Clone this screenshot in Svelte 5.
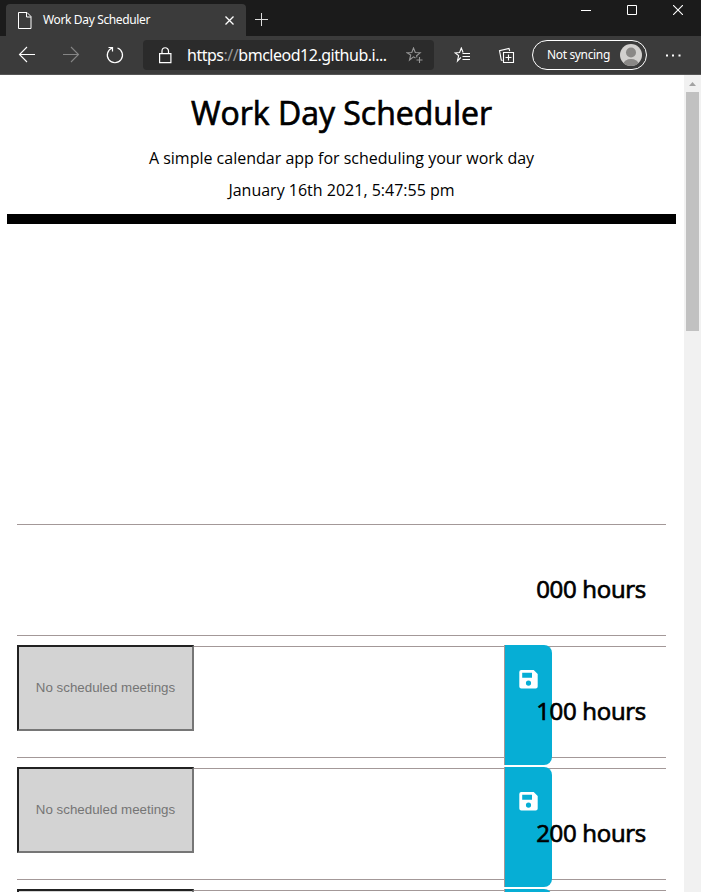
<script>
  const hours = ['000 hours', '100 hours', '200 hours', ''];
</script>

<div class="window">
  <div class="titlebar">
    <div class="tab">
      <svg class="page-icon" width="14" height="17" viewBox="0 0 14 17" fill="none" stroke="#fff"><path d="M.5.5h8.500l4 4v12H.5zM8.500.5v4.500H13" /></svg>
      <span class="tab-title">Work Day Scheduler</span>
      <svg width="9" height="9" viewBox="0 0 9 9" stroke="#fff" stroke-width="1.3"><path d="M.5.5l8 8M8.5.5l-8 8" /></svg>
    </div>
    <svg class="new-tab" width="13" height="13" viewBox="0 0 13 13" stroke="#ddd"><path d="M6.5 0v13M0 6.5h13" /></svg>
    <div class="controls">
      <svg width="10" height="10" viewBox="0 0 10 10" stroke="#fff"><path d="M0 5.5h10" /></svg>
      <svg width="10" height="10" viewBox="0 0 10 10" fill="none" stroke="#fff"><path d="M.5.5h9v9h-9z" /></svg>
      <svg width="10" height="10" viewBox="0 0 10 10" stroke="#fff" stroke-width="1.1"><path d="M0 0l10 10M10 0L0 10" /></svg>
    </div>
  </div>

  <div class="toolbar">
    <svg width="143" height="38" viewBox="0 36 143 38" fill="none" stroke="#fff" stroke-width="1.1">
      <path d="M35 54.5H19.5M27 47l-7.5 7.500L27 62" />
      <path stroke="#858585" d="M63 54.5h15.500M71 47l7.500 7.500L71 62" />
      <path d="M112.300 48a7.600 7.600 0 1 0 5.200 0M108.500 47.500h4v4" stroke-width="1.200" />
    </svg>
    <div class="address">
      <svg width="13" height="17" viewBox="0 0 13 17" fill="none" stroke="#fff" stroke-width="1.2"><path d="M.6 6.600h11.300v9H.6zM3 6.600V4a3.250 3.250 0 0 1 6.500 0v2.600" /></svg>
      <span class="url">https<i>://</i>bmcleod12.github.i...</span>
      <svg class="star" width="17" height="17" viewBox="0 0 17 17" fill="none" stroke="#969696" stroke-width="1.1"><path d="M9.500 11l-2-1.200-4 3.200 1.200-5.100L1 5.800l4.800-.3L7.500 1l1.800 4.500 4.900.3-3.600 3 .4 1.700M13.500 10v6M10.500 13h6" /></svg>
    </div>
    <svg class="fav" width="17" height="17" viewBox="0 0 17 17" fill="none" stroke="#fff" stroke-width="1.1"><path d="M6.800 10.500L3.500 14l1.100-5.500L1 5.900l4.600-.4L7.300 1l1.800 4.500M8.500 6.500H16M8.500 9.500H16M8.500 12.500H16" /></svg>
    <svg class="collections" width="17" height="17" viewBox="0 0 17 17" fill="none" stroke="#fff" stroke-width="1.1"><path d="M5.500 5.500h10v10h-10zM10.500 7.500v6M7.500 10.500h6M4.500 13.500l-1.200-.5L1.500 3.700 11 1.500l.7 2.500" /></svg>
    <div class="profile">
      <span>Not syncing</span>
      <svg width="22" height="22" viewBox="0 0 22 22"><defs><clipPath id="face"><circle cx="11" cy="11" r="11" /></clipPath></defs><g clip-path="url(#face)"><path fill="#d2d0ce" d="M0 0h22v22H0z" /><circle cx="11" cy="8.500" r="5" fill="#8a8886" /><ellipse cx="11" cy="20" rx="7.500" ry="5" fill="#8a8886" /></g></svg>
    </div>
    <svg class="more" width="15" height="3" viewBox="0 0 15 3" fill="#fff"><path d="M0 .5h2v2H0zM6 .5h2v2H6zM12.500 .5h2v2h-2z" /></svg>
  </div>

  <div class="viewport">
    <main>
      <header>
        <h1>Work Day Scheduler</h1>
        <p>A simple calendar app for scheduling your work day</p>
        <p>January 16th 2021, 5:47:55 pm</p>
      </header>
      <div class="planner">
        {#each hours as hour, i}
          <div class="row">
            {#if i > 0}
              <input placeholder={hour ? 'No scheduled meetings' : ''} aria-label="Meeting" />
              <button aria-label="Save">
                <svg width="19" height="19" viewBox="0 0 19 19"><path fill="#fff" fill-rule="evenodd" d="M2.300 0H14.700l4 4v12.500a2 2 0 0 1-2 2H2.300a2 2 0 0 1-2-2V2a2 2 0 0 1 2-2zM3.200 2.800v4.900h9.800v-4.900zM9.500 10.500a2.600 2.600 0 1 0 0 5.200 2.600 2.600 0 0 0 0-5.200z" /></svg>
              </button>
            {/if}
            {#if hour}
              <h2>{hour}</h2>
            {/if}
          </div>
        {/each}
      </div>
    </main>
    <div class="scrollbar">
      <svg width="7" height="4" viewBox="0 0 7 4"><path fill="#a3a3a3" d="M0 4l3.500-4L7 4z" /></svg>
      <div class="thumb"></div>
    </div>
  </div>
</div>

<style>
  :global(body) { margin: 0; overflow: hidden; }
  * { box-sizing: border-box; }
  svg { display: block; flex: none; }
  .window { width: 701px; height: 892px; overflow: hidden; background: #fff; font-family: "Open Sans", sans-serif; display: flex; flex-direction: column; }
  .titlebar { height: 36px; flex: none; background: #1b1b1b; display: flex; align-items: flex-start; }
  .tab { margin: 4px 0 0 6px; width: 240px; height: 32px; background: #3b3b3b; border-radius: 4px 4px 0 0; color: #fff; display: flex; align-items: center; padding: 0 12px; }
  .tab-title { font: 12px/16px "Noto Sans", sans-serif; letter-spacing: -0.36px; margin-left: 11px; flex: 1; white-space: nowrap; }
  .new-tab { margin: 13px 0 0 9px; }
  .controls { margin: 5px 18px 0 auto; display: flex; gap: 36px; }
  .toolbar { height: 39px; flex: none; background: #3b3b3b; border-bottom: 1px solid #555; display: flex; align-items: center; color: #fff; }
  .address { width: 291px; height: 30px; flex: none; background: #2b2b2b; border-radius: 4px; display: flex; align-items: center; padding: 0 11px 0 16px; }
  .url { font: 16px/22px "Noto Sans", sans-serif; margin-left: 15px; letter-spacing: -0.48px; white-space: nowrap; }
  .url i { font-style: normal; color: #999; }
  .star { margin-left: auto; }
  .fav { margin-left: 20px; }
  .collections { margin-left: 27px; }
  .profile { margin-left: 17px; width: 115px; height: 30px; flex: none; border: 1px solid #fff; border-radius: 15px; display: flex; align-items: center; justify-content: space-between; padding: 0 4px 0 14px; font: 12px/16px "Noto Sans", sans-serif; letter-spacing: -0.35px; white-space: nowrap; }
  .more { margin-left: 19px; }
  .viewport { height: 817px; flex: none; display: flex; color: #000; }
  main { width: 684px; padding: 0 8px 0 7px; overflow: hidden; }
  header { height: 149px; border-bottom: 10px solid #000; text-align: center; padding-top: 14px; }
  h1, h2 { margin: 0; font-weight: 400; -webkit-text-stroke: 0.7px #000; white-space: nowrap; }
  h1 { font-size: 32px; line-height: 48px; margin-bottom: 3px; }
  p { margin: 0; padding-top: 5px; font-size: 16px; line-height: 27px; white-space: nowrap; }
  .planner { padding: 300px 10px 0; }
  .row { height: 112px; margin-bottom: 10px; border-top: 1px solid #a39898; border-bottom: 1px solid #a39898; display: grid; grid-template: 110px / 487px 48px 1fr; }
  input { grid-area: 1 / 1; width: 177px; height: 86px; margin: -2px 0 0; padding: 0 0 2px; border: 2px solid; border-color: #212121 #767676 #767676 #212121; background: #d3d3d3; font: 13.33px "Liberation Sans", sans-serif; text-align: center; border-radius: 0; }
  input::placeholder { color: #757575; opacity: 1; }
  button { grid-area: 1 / 2; height: 120px; margin: -2px 0 0; padding: 25px 0 0 14px; border: 0; border-left: 1px solid #a39898; border-radius: 0 8px 8px 0; background: #06aed5; display: flex; align-items: flex-start; }
  h2 { grid-area: 1 / 1 / 2 / 4; z-index: 1; pointer-events: none; text-align: right; font-size: 24px; letter-spacing: -0.3px; line-height: 36px; padding: 46px 20px 0 0; }
  .scrollbar { width: 17px; background: #f1f1f1; display: flex; flex-direction: column; padding-top: 7px; }
  .scrollbar svg { margin-left: 5px; }
  .thumb { width: 13px; height: 239px; margin: 6px 0 0 2px; background: #c1c1c1; }
</style>
